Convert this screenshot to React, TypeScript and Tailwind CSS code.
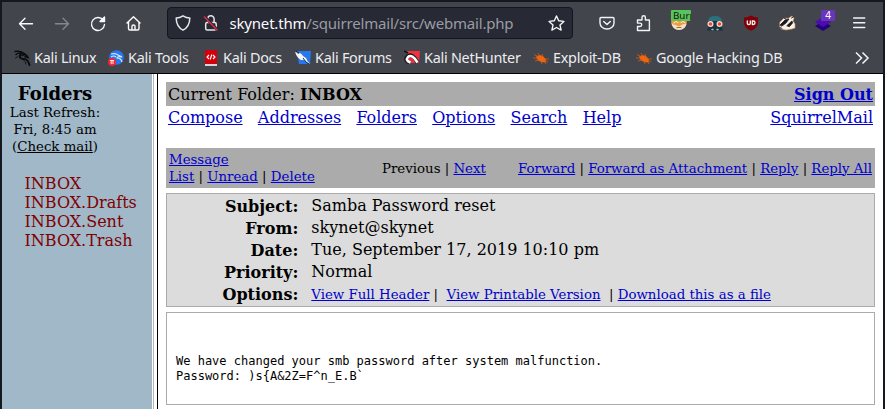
import React from "react";

const A = ({ children }: { children: React.ReactNode }) => (
  <a className="text-[#0000cc] underline">{children}</a>
);

const Bug = () => (
  <svg className="block" width="16" height="14" viewBox="0 0 16 14">
    <path d="M3 5.500 L6.500 4 L10 5 L13 8.500 L12.500 11.500 L8 11 L4.500 9Z" fill="#f0650f" />
    <path d="M1 3.500l4 2M0 7h5M2 10l4-1M5 2l2 3M9.500 3l-.5 3M12 8h4M12 9.500l3 1.500M8 10l1 3M12 11l1 2" stroke="#d65a12" strokeWidth=".8" fill="none" />
  </svg>
);

const Dragon = () => (
  <svg className="block" width="18" height="18" viewBox="0 0 18 18" fill="none" stroke="#0b0c0f" strokeLinecap="round">
    <path d="M1 2.500Q7 1.500 11 5" strokeWidth="1.500" />
    <path d="M2 5.500Q4 3.500 8 4.500" strokeWidth="1.300" />
    <path d="M7.500 4Q4.500 7 6.500 9Q8 10 11 10.200Q14 11 15.500 16" strokeWidth="1.900" />
    <path d="M8 6.500Q10 5 12.500 6.200L14 8.500L11 7.800" strokeWidth="1.600" />
    <path d="M1.500 9L4 7.500M9 10.500Q12.500 13 12 15" strokeWidth=".8" />
  </svg>
);

const Tools = () => (
  <svg className="block" width="16" height="16" viewBox="0 0 16 16">
    <circle cx="8.500" cy="7.500" r="7.300" fill="#2777ee" />
    <path d="M3 4q5-1 7 1l4 2q-5-1-5 1q4 0 5 4M3 7q3-2 5 0" stroke="#d9e8ff" strokeWidth="1.200" fill="none" />
    <circle cx="4" cy="12" r="4" fill="#f22536" />
    <path d="M2 10.500h4M3.200 10.500v3.500M5 10.500v3.500" stroke="#fff" strokeWidth=".9" />
  </svg>
);

const Docs = () => (
  <svg className="block" width="12" height="16" viewBox="0 0 12 16">
    <path d="M0 0h12v14H0z" fill="#d3000b" />
    <path d="M0 14h12v2H0z" fill="#d9d4d4" />
    <path d="M4 5L2 7l2 2M8 5l2 2-2 2M6.800 4.500l-1.600 5" stroke="#fff" strokeWidth="1.100" fill="none" />
  </svg>
);

const Forums = () => (
  <svg className="block" width="16" height="16" viewBox="0 0 16 16">
    <path d="M2 1h14l-1 13H4z" fill="#2678ee" />
    <path d="M0 2q2 0 3 2l2-1q2 1 3 3l3 2q1 3 4 6l-4-2-2-2H6Q2 8 0 2z" fill="#f5f5f5" />
    <path d="M1 1l3 2M8 8l3 4 3 2" stroke="#202228" strokeWidth="1" fill="none" />
  </svg>
);

const Hunter = () => (
  <svg className="block" width="16" height="16" viewBox="0 0 16 16">
    <path d="M3 1h13l-1 12H5z" fill="#f0323e" />
    <path d="M5.500 12.500Q0 10 3.500 6.500Q8 2.500 13.500 12.500" stroke="#16171b" strokeWidth="4" fill="none" />
    <path d="M6.500 12.500Q1 10.500 4 7Q8 3.500 13.500 12.500" stroke="#fff" strokeWidth="2.600" fill="none" />
    <path d="M0 1l4 2" stroke="#111" strokeWidth="1.500" />
  </svg>
);

const bookmarks = [
  { label: "Kali Linux", icon: <Dragon />, box: "w-[18px] mr-[2px]", width: "w-[94px]" },
  { label: "Kali Tools", icon: <Tools />, box: "w-[16px] mr-[4px]", width: "w-[97px]" },
  { label: "Kali Docs", icon: <Docs />, box: "w-[12px] mr-[6px]", width: "w-[90px]" },
  { label: "Kali Forums", icon: <Forums />, box: "w-[16px] mr-[4px]", width: "w-[109px]" },
  { label: "Kali NetHunter", icon: <Hunter />, box: "w-[16px] mr-[4px]", width: "w-[129px]" },
  { label: "Exploit-DB", icon: <Bug />, box: "w-[16px] mr-[4px]", width: "w-[103px]" },
  { label: "Google Hacking DB", icon: <Bug />, box: "w-[16px] mr-[4px]", width: "w-[160px]" },
];

const Toolbar = () => (
  <div className="flex h-[39px] items-center pt-[3px]">
    <svg className="block shrink-0" width="165" height="36" viewBox="2 4 165 36" fill="none" stroke="#fbfbfe" strokeWidth="1.400" strokeLinecap="round" strokeLinejoin="round">
      <path d="M32.500 22.800H19.500M25 17.300l-5.500 5.500 5.500 5.500" />
      <path d="M55.500 22.800h13M63 17.300l5.500 5.500-5.500 5.500" stroke="#85878d" />
      <path d="M103.500 19.500A6.500 6.500 0 1 0 104.500 23.500" />
      <path d="M104.500 16v4.500h-4.500z" fill="#fbfbfe" />
      <path d="M127 22l6.500-6.300L140 22M128.500 21v6.500q0 1.500 1.500 1.500h7.500q1.500 0 1.500-1.500V21M132 29v-4q0-1 1.500-1t1.500 1v4" />
    </svg>
    <div className="flex h-8 w-[406px] shrink-0 items-center rounded-[4px] border border-[#15161c] bg-[#272934] pr-[7px]">
      <svg className="block shrink-0" width="58" height="30" viewBox="169 7 58 30" fill="none" stroke="#e6e6e8" strokeWidth="1.500" strokeLinejoin="round">
        <path d="M184 14.800q3.200 2 6.800 2.200 0 8.500-6.800 12.200-6.800-3.700-6.800-12.200 3.600-.2 6.800-2.200z" />
        <rect x="206.700" y="21.500" width="10.500" height="7.500" rx="1.500" />
        <path d="M208.700 21.500v-3.500a3.200 3.200 0 0 1 6.400 0v3.500" />
        <path d="M205.500 15.500l13 13.500" stroke="#272934" strokeWidth="3" />
        <path d="M205 15.500l13.500 14" stroke="#e22850" strokeWidth="1.500" />
      </svg>
      <span className="ml-[3.500px] flex-1 whitespace-nowrap text-[15px] tracking-[-0.19px] text-[#9b9ca3]"><span className="text-[#fbfbfe]">skynet.thm</span>/squirrelmail/src/webmail.php</span>
      <svg className="block" width="17" height="17" viewBox="0 0 17 17" fill="none" stroke="#f4f4f6" strokeWidth="1.400" strokeLinejoin="round">
        <path d="M8.500 1l2.200 4.800 5.200.6-3.900 3.500 1.100 5.200-4.600-2.600-4.600 2.600L5 9.900 1.100 6.400l5.200-.6z" />
      </svg>
    </div>
    <div className="relative ml-[25px] h-9 w-[270px]">
      <svg className="block" width="270" height="36" viewBox="598 4 270 36" fill="none" stroke="#f4f4f6" strokeWidth="1.400" strokeLinejoin="round" strokeLinecap="round">
        <path d="M601 16.500h12q1 0 1 1v4.500a7 6 0 0 1-14 0v-4.500q0-1 1-1zM603.700 20.500l3.300 3 3.300-3" />
        <path d="M637.500 19h4.500v-2.500a1.700 1.700 0 0 1 3.400 0V19h4v10.500h-11.900v-4h2.500a1.700 1.700 0 0 0 0-3.400h-2.500z" />
        <circle cx="679" cy="21" r="7.800" fill="#f29b3d" stroke="none" />
        <path d="M671.500 22q2 2 4 2l3.500 1.500 3.500-2 4-1q-1 6.500-7.500 6.500t-7.500-7z" fill="#efe2cc" stroke="none" />
        <path d="M674 22l2-1.500 2 1M681 21.500l2-1 2 1" stroke="#f8efe0" strokeWidth="1" />
        <path d="M677 26.500h4" stroke="#9a6a39" strokeWidth="1" />
        <path d="M708 20.500q0-5.500 7-5.500t7 5.500z" fill="#28717d" stroke="none" />
        <path d="M708 20h14v6.500l1 3h-16l1-3z" fill="#18343d" stroke="none" />
        <circle cx="710.500" cy="23" r="2.400" fill="#e84a32" stroke="#f7d9d3" strokeWidth="1.200" />
        <circle cx="719.500" cy="23" r="2.400" fill="#e84a32" stroke="#f7d9d3" strokeWidth="1.200" />
        <path d="M712 28.500h1M717 28.500h1" stroke="#aebec4" />
        <path d="M751 14.500q3.500 2 7 2v5.500q0 5-7 7.700-7-2.700-7-7.700v-5.500q3.500 0 7-2z" fill="#800009" stroke="none" />
        <path d="M747.300 20v2.500q0 1 1.500 1t1.500-1V20M752.300 20v3.500h1q1.700 0 1.700-1.750T753.300 20z" strokeWidth="1.300" />
        <path d="M780 21l4-4 4 .5 4-2.500 2 2-1 3 2 3v4l-3 1-3 .5-3 .5-5-1-1.500-2.500z" fill="#f7f0e5" stroke="#d99462" strokeWidth=".6" />
        <path d="M780 24l5-5 4-1-3 4-4 3zM787 24.500l5-4.500.5 2-3 3.500zM780 26.500l2 1" fill="#17191e" stroke="#17191e" strokeWidth=".8" />
        <path d="M784 17l1.500.8M791.500 17l1.500-1" stroke="#17191e" strokeWidth="1" />
        <path d="M815 25l8-5 8 5-8 5z" fill="#25007c" stroke="none" />
        <path d="M815 21l8-5 8 5-8 5z" fill="#4b0cb0" stroke="none" />
        <path d="M853.700 17h11M853.700 21.700h11M853.700 26.400h11" strokeWidth="1.500" />
      </svg>
      <span className="absolute left-[73px] top-[5px] h-[11px] w-5 overflow-hidden rounded-[1px] bg-[#59c45b] pl-[2px] text-[9.800px] leading-[11px] text-[#101510]">Burp</span>
      <span className="absolute left-[223px] top-[5px] h-[11px] w-[14px] rounded-[1px] bg-[#6a35bd] text-center text-[10px] leading-[11px] text-white">4</span>
    </div>
  </div>
);

const Header = ({ name, children }: { name: string; children: React.ReactNode }) => (
  <div className="flex h-[22px]">
    <b className="w-[131.300px] pt-px text-right">{name}:</b>
    <span className="ml-[13px] whitespace-pre">{children}</span>
  </div>
);

export default function App() {
  return (
    <div className="flex h-[409px] w-[885px] flex-col overflow-hidden border-r-2 border-l-2 border-t-2 border-[#141821] font-['DejaVu_Serif',serif] text-base leading-[19px] text-black">
      <header className="h-[72px] shrink-0 border-b border-black bg-[#42454c] font-['Noto_Sans',sans-serif]">
        <Toolbar />
        <div className="flex h-[33px] items-center pl-3 text-[14.400px] tracking-[-0.25px] text-[#ededf0]">
          {bookmarks.map((b) => (
            <div key={b.label} className={`flex shrink-0 items-center whitespace-nowrap ${b.width}`}>
              <span className={`shrink-0 ${b.box}`}>{b.icon}</span>{b.label}
            </div>
          ))}
          <svg className="ml-[59px] block" width="16" height="14" viewBox="0 0 16 14" fill="none" stroke="#f4f4f6" strokeWidth="1.500"><path d="M1 1.500l5.500 5.500L1 12.500M7.500 1.500L13 7l-5.500 5.500" /></svg>
        </div>
      </header>
      <div className="flex flex-1">
        <aside className="w-[150px] bg-[#a0b8c8]">
          <div className="flex w-[106px] flex-col items-center pt-[9px] text-[13.333px] leading-[17px]">
            <b className="text-[18px] leading-[21px]">Folders</b>
            <span>Last Refresh:</span>
            <span>Fri, 8:45 am</span>
            <span>(<a className="underline">Check mail</a>)</span>
          </div>
          <nav className="flex flex-col pt-[19px] pl-[22.500px] text-[#800000]">
            <a>INBOX</a><a>INBOX.Drafts</a><a>INBOX.Sent</a><a>INBOX.Trash</a>
          </nav>
        </aside>
        <div className="flex w-[6px] bg-white"><i className="ml-px w-px bg-[#b8b3af]" /><i className="ml-[3px] w-px bg-black" /></div>
        <main className="flex flex-1 flex-col bg-white px-2 pt-2">
          <div className="flex h-6 items-center justify-between bg-[#ababab] px-[2px]">
            <span>Current Folder: <b>INBOX</b></span><b><A>Sign Out</A></b>
          </div>
          <div className="flex h-[42px] gap-[15.260px] px-[2px] pt-[2px]">
            <A>Compose</A><A>Addresses</A><A>Folders</A><A>Options</A><A>Search</A><A>Help</A>
            <span className="ml-auto"><A>SquirrelMail</A></span>
          </div>
          <div className="flex h-10 items-center whitespace-nowrap bg-[#ababab] px-[3px] text-[13.333px] leading-[17px]">
            <span className="w-[213px]"><A>Message<br />List</A> | <A>Unread</A> | <A>Delete</A></span>
            <span>Previous | <A>Next</A></span>
            <span className="ml-auto"><A>Forward</A> | <A>Forward as Attachment</A> | <A>Reply</A> | <A>Reply All</A></span>
          </div>
          <section className="mt-[5px] h-[114px] border border-[#ababab] bg-[#dcdcdc] pt-[2px]">
            <Header name="Subject">Samba Password reset</Header>
            <Header name="From">skynet@skynet</Header>
            <Header name="Date">Tue, September 17, 2019 10:10 pm</Header>
            <Header name="Priority">Normal</Header>
            <Header name="Options"><span className="text-[13.333px]"><A>View Full Header</A>{" |  "}<A>View Printable Version</A>{"  | "}<A>Download this as a file</A></span></Header>
          </section>
          <pre className="mt-[5px] h-[93px] border border-[#ababab] pt-[41px] pl-[9px] font-['DejaVu_Sans_Mono',monospace] text-[12px] leading-[15px]">{"We have changed your smb password after system malfunction.\nPassword: )s{A&2Z=F^n_E.B`"}</pre>
        </main>
      </div>
    </div>
  );
}
